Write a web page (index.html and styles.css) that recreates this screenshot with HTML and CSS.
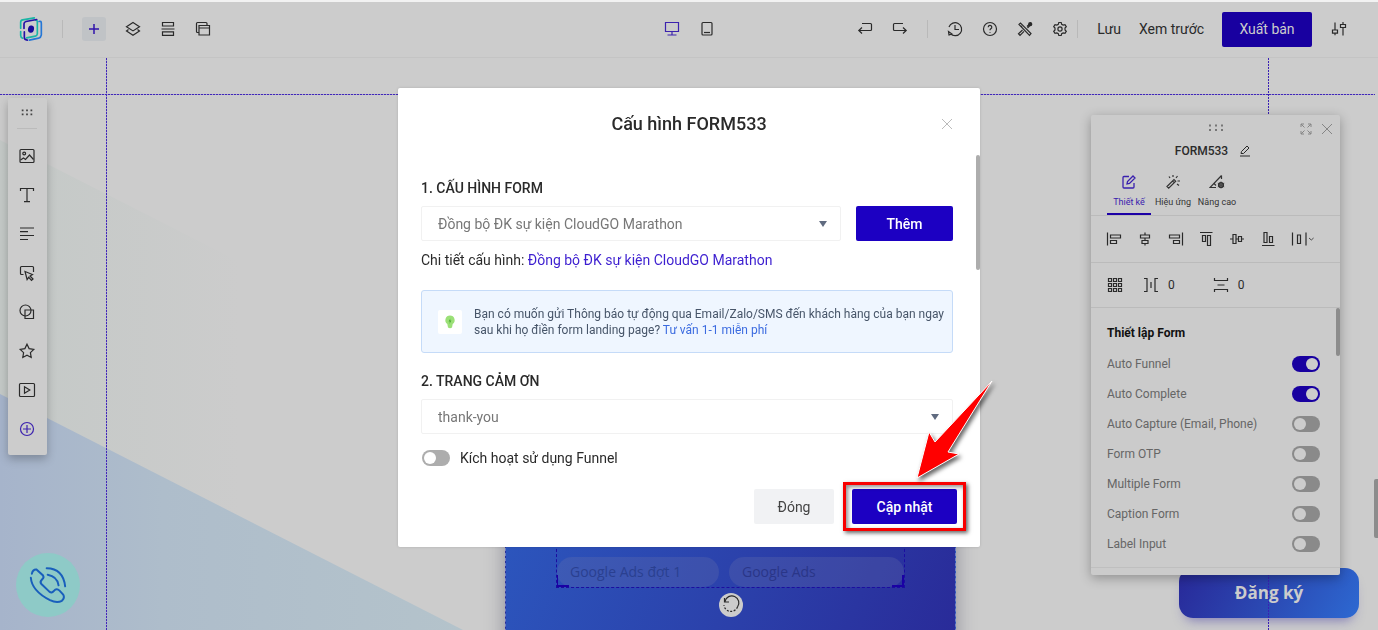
FILE: index.html
```html
<!DOCTYPE html>
<html lang="vi">
<head>
<meta charset="utf-8">
<meta name="viewport" content="width=device-width, initial-scale=1">
<title>Cấu hình FORM533</title>
<link rel="stylesheet" href="styles.css">
</head>
<body>
<div class="app">
  <header class="topbar">
    <div class="topbar-group">
      <svg class="logo" viewBox="57 52 72 75" fill="none" stroke-width="5" stroke-linecap="round" aria-label="Logo">
        <path stroke="#19b5a5" d="M62 87V69Q62 63 68 62L103 56M62 97V109Q62 115 68 117M107 63Q112 62 112 69V104Q111 110 106 111L80 116"/>
        <path stroke="#2410a6" d="M72 88V74Q72 69 78 67L110 61M73 98V115Q73 122 82 123"/>
        <path stroke="#2577d6" d="M117 67Q124 64 124 73V107Q123 115 116 117L88 123"/>
        <ellipse cx="93" cy="90" rx="9" ry="11" fill="#1a0b9c" stroke="none" transform="rotate(12 93 90)"/>
      </svg>
      <span class="divider"></span>
      <div class="tools">
        <button class="tool tool-add" aria-label="Thêm phần tử"><svg viewBox="0 0 24 24"><path stroke-width="1.5" d="M12 7v10M7 12h10"/></svg></button>
        <button class="tool" aria-label="Lớp"><svg viewBox="0 0 24 24"><path d="M12 5.500l6.500 4.200-6.500 4.200-6.500-4.200zM7.500 12.500l-2 1.500 6.500 4.300 6.500-4.300-2-1.500"/></svg></button>
        <button class="tool" aria-label="Section"><svg viewBox="0 0 24 24"><path d="M6.500 5.500h11v3.500h-11zM5.500 12h13M6.500 14.800h11v3.500h-11z"/></svg></button>
        <button class="tool" aria-label="Popup"><svg viewBox="0 0 24 24"><path d="M8 8.500h10.500v9.500H8zM8 11h10.500M8 15.500H6.500a1 1 0 0 1-1-1v-8a1 1 0 0 1 1-1h8.500a1 1 0 0 1 1 1v2"/></svg></button>
      </div>
    </div>
    <div class="tools">
      <button class="tool tool-active" aria-label="Máy tính"><svg viewBox="0 0 24 24"><path d="M5.500 5.500h13v9h-13zM12 14.500v3M7.500 18h9"/></svg></button>
      <button class="tool" aria-label="Di động"><svg viewBox="0 0 24 24"><rect x="7" y="5.500" width="10" height="12.500" rx="1"/><path d="M9 15.500h6"/></svg></button>
    </div>
    <div class="topbar-group topbar-end">
      <div class="tools">
        <button class="tool" aria-label="Hoàn tác"><svg viewBox="0 0 24 24"><path d="M9 6.500h8.500a1 1 0 0 1 1 1v5a1 1 0 0 1-1 1H6M9 10.500l-3.200 3 3.200 3"/></svg></button>
        <button class="tool" aria-label="Làm lại"><svg viewBox="0 0 24 24"><path d="M15 6.500H6.500a1 1 0 0 0-1 1v5a1 1 0 0 0 1 1H18M15 10.500l3.200 3-3.200 3"/></svg></button>
      </div>
      <span class="divider divider-wide"></span>
      <div class="tools">
        <button class="tool" aria-label="Lịch sử"><svg viewBox="0 0 24 24"><path d="M6 10a6.500 6.500 0 1 1 1.500 6.800M12 8v4.500h4M5.500 14.500l.5 3.500 3-1z"/></svg></button>
        <button class="tool" aria-label="Trợ giúp"><svg viewBox="0 0 24 24"><circle cx="12" cy="12" r="6.500"/><path d="M10.200 10.300a1.800 1.800 0 1 1 2.500 1.600q-.7.300-.7 1.300M12 15v.8"/></svg></button>
        <button class="tool" aria-label="Công cụ"><svg viewBox="0 0 24 24"><path d="M6 7.500L7.500 6l10.500 10.500-1.500 1.800zM14 9.500l3.500-3.500 1 1-4 4M9.500 13l-4 3.800 1.500 1.500 4-4M8 10l1-1"/><circle cx="17.200" cy="7.200" r="1.500" fill="currentColor"/></svg></button>
        <button class="tool" aria-label="Cài đặt"><svg viewBox="0 0 24 24"><path d="M10.800 5.500h2.400l.5 1.800 1.400.8 1.900-.5 1.300 2.100-1.300 1.400v1.800l1.300 1.400-1.300 2.100-1.900-.5-1.400.8-.5 1.800h-2.400l-.5-1.800-1.400-.8-1.900.5-1.300-2.100L7 12.900v-1.800L5.700 9.700 7 7.600l1.900.5 1.400-.8z"/><circle cx="12" cy="12" r="2.100"/></svg></button>
      </div>
      <span class="divider divider-near"></span>
      <nav class="actions">
        <a href="#save">Lưu</a>
        <a href="#preview">Xem trước</a>
        <button class="btn btn-publish">Xuất bản</button>
      </nav>
      <button class="tool tool-sliders" aria-label="Tùy chỉnh"><svg viewBox="0 0 24 24"><path d="M8 5.500v7M5.500 13h5v3.200h-5zM8 16.200v2M16 5v2.500M13.500 7.500h5v3h-5zM16 10.500v8"/></svg></button>
    </div>
  </header>

  <main class="canvas">
    <svg class="backdrop" viewBox="0 0 1378 573" preserveAspectRatio="xMinYMin slice" aria-hidden="true">
      <defs>
        <linearGradient id="haze"><stop offset="0" stop-color="#c4c9c7"/><stop offset="1" stop-color="#c4c9c7" stop-opacity="0"/></linearGradient>
        <linearGradient id="wedge"><stop offset="0" stop-color="#a6b4cb"/><stop offset=".35" stop-color="#aebdcb"/><stop offset="1" stop-color="#b4c3cb"/></linearGradient>
      </defs>
      <path fill="url(#haze)" d="M0 82L240 204V573H0z"/>
      <path fill="url(#wedge)" d="M0 336L465 573H0z"/>
    </svg>

    <section class="hero">
      <div class="hero-form">
        <div class="field">Google Ads đợt 1</div>
        <div class="field">Google Ads</div>
        <span class="corner corner-left"></span>
        <span class="corner corner-right"></span>
      </div>
      <button class="rotate" aria-label="Xoay"><svg viewBox="0 0 24 24"><path d="M6 8.500A7 7 0 1 1 18.500 14M5.500 5v4h4.500"/><path stroke-dasharray="2 1.500" d="M18.500 14A7 7 0 0 1 5 12"/></svg></button>
    </section>

    <button class="signup">Đăng ký</button>
    <span class="guide guide-h"></span>
    <span class="guide guide-v guide-v-left"></span>
    <span class="guide guide-v guide-v-right"></span>
    <span class="page-scroll"></span>

    <a class="call" href="#call" aria-label="Gọi điện">
      <svg viewBox="48 517 194 194"><path d="M96 580Q99 566 110 567L130 585Q134 592 127 597Q119 604 125 611L149 634Q157 640 163 632Q171 622 180 631L191 643Q197 653 187 662Q172 670 151 660C118 643 95 620 93 592M141 563Q191 564 197 618M144 583Q173 588 177 615"/></svg>
    </a>

    <aside class="palette">
      <svg class="grip" viewBox="0 0 14 8"><path d="M1 1.500h2M6 1.500h2M11 1.500h2M1 6h2M6 6h2M11 6h2"/></svg>
      <button class="tool" aria-label="Ảnh"><svg viewBox="0 0 24 24"><rect x="5" y="5.500" width="14" height="13" rx="1"/><circle cx="9.200" cy="9.500" r="1.400"/><path d="M5.500 16l3-2 2 1.500 4-4.500 4 4.500"/></svg></button>
      <button class="tool" aria-label="Văn bản"><svg viewBox="0 0 24 24"><path d="M5.500 8V5.500h13V8M12 5.500v13M9 18.700h6"/></svg></button>
      <button class="tool" aria-label="Đoạn văn"><svg viewBox="0 0 24 24"><path d="M5 6h14M5 9.700h8M5 13.500h14M5 17.500h8"/></svg></button>
      <button class="tool" aria-label="Nút"><svg viewBox="0 0 24 24"><path d="M8.500 13.500H6.500a1 1 0 0 1-1-1v-6a1 1 0 0 1 1-1h11a1 1 0 0 1 1 1V11M10 10.500l7.500 3-2.500 1.500 3 3-1.500 1.300-2.800-3-1.600 2.200z"/></svg></button>
      <button class="tool" aria-label="Hình khối"><svg viewBox="0 0 24 24"><circle cx="10.500" cy="10.500" r="5.500"/><path d="M10 10h8.500v8.500H10z"/></svg></button>
      <button class="tool" aria-label="Biểu tượng"><svg viewBox="0 0 24 24"><path d="M12 5.200l2.100 4.400 4.700.7-3.400 3.400.8 4.800L12 16.300l-4.200 2.200.8-4.800-3.400-3.400 4.700-.7z"/></svg></button>
      <button class="tool" aria-label="Video"><svg viewBox="0 0 24 24"><rect x="4.500" y="5.500" width="15" height="13" rx="1"/><path d="M9.500 8.800v6.400l5.300-3.200z"/></svg></button>
      <button class="tool tool-active" aria-label="Thêm"><svg viewBox="0 0 24 24"><circle cx="12" cy="12" r="6.500"/><path d="M12 8v8M8 12h8"/></svg></button>
    </aside>

    <aside class="panel">
      <div class="panel-head">
        <svg class="grip" viewBox="0 0 14 8"><path d="M0 1.500h2M6 1.500h2M12 1.500h2M0 6h2M6 6h2M12 6h2"/></svg>
        <h2>FORM533 <svg viewBox="0 0 12 12"><path d="M2 8.500l.5-2L8 1l2 2-5.500 5.500zM1 11h10"/></svg></h2>
        <div class="panel-window">
          <button aria-label="Mở rộng"><svg viewBox="0 0 12 12"><path d="M1 4V1h3M8 1h3v3M11 8v3H8M4 11H1V8M1 1l3.500 3.500M11 1L7.500 4.500M11 11L7.500 7.500M1 11l3.500-3.500"/></svg></button>
          <button aria-label="Đóng bảng"><svg viewBox="0 0 12 12"><path d="M1 1l10 10M11 1L1 11"/></svg></button>
        </div>
      </div>
      <nav class="tabs">
        <button class="tab tab-on"><svg viewBox="0 0 16 16"><path stroke-width="1.300" d="M8 2.500H3a1 1 0 0 0-1 1v9.500a1 1 0 0 0 1 1h9a1 1 0 0 0 1-1V9M6 10l.5-2.500L12 2l2 2-5.500 5.500z"/></svg>Thiết kế</button>
        <button class="tab"><svg viewBox="0 0 16 16"><path d="M2 12.500l7-7 1.700 1.700-7 7zM7.500 7l1.700 1.700M8 1v2M4 2.500l1 1.500M12.500 2L11 4M12.500 7h2.500M12 10l2 1.500"/></svg>Hiệu ứng</button>
        <button class="tab"><svg viewBox="0 0 16 16"><path d="M12.500 1.500L1 13.500h6M12.500 1.500V5M5 9.500l2 2"/><circle cx="12" cy="11" r="2.300" stroke-width="1.600"/><path d="M12 7.500v7M8.800 9.300l6.400 3.500M8.800 12.800l6.400-3.500" stroke-width=".8"/></svg>Nâng cao</button>
      </nav>
      <div class="align-row">
        <button aria-label="Căn trái"><svg viewBox="0 0 16 16"><path d="M1.500 1.500v13M4.500 4h10v3h-10zM4.500 9.500h6v3h-6z"/></svg></button>
        <button aria-label="Căn giữa ngang"><svg viewBox="0 0 16 16"><path d="M8 1.500V4M8 7v2.500M8 12.500v2M3.500 4h9v3h-9zM5 9.500h6v3H5z"/></svg></button>
        <button aria-label="Căn phải"><svg viewBox="0 0 16 16"><path d="M14.500 1.500v13M1.500 4h10v3h-10zM5.500 9.500h6v3h-6z"/></svg></button>
        <button aria-label="Căn trên"><svg viewBox="0 0 16 16"><path d="M2 1.500h12.500M4.500 4.500h3v6h-3zM9.500 4.500h3v10h-3z"/></svg></button>
        <button aria-label="Căn giữa dọc"><svg viewBox="0 0 16 16"><path d="M1 8h3M7 8h2.500M12.500 8H15M4 3.500h3v9H4zM9.500 5.500h3v5h-3z"/></svg></button>
        <button aria-label="Căn dưới"><svg viewBox="0 0 16 16"><path d="M2 14.500h12.500M4 1.500h3v10H4zM9.500 5.500h3v6h-3z"/></svg></button>
        <button class="spread" aria-label="Phân bố"><svg viewBox="0 0 24 16"><path d="M1.500 1.500v13M15 1.500v13M6.500 4h3v8.500h-3z"/><path stroke-width=".8" d="M18 7l2.300 2 2.300-2"/></svg></button>
      </div>
      <div class="space-row">
        <button aria-label="Lưới"><svg viewBox="0 0 16 16"><path d="M1.500 1.500h3v3h-3zM6.500 1.500h3v3h-3zM11.500 1.500h3v3h-3zM1.500 6.500h3v3h-3zM6.500 6.500h3v3h-3zM11.500 6.500h3v3h-3zM1.500 11.500h3v3h-3zM6.500 11.500h3v3h-3zM11.500 11.500h3v3h-3z"/></svg></button>
        <span class="space"><svg viewBox="0 0 16 16"><path d="M1 1.500h3v13H1M15 1.500h-3v13h3M8 5v6"/></svg>0</span>
        <span class="space"><svg viewBox="0 0 16 16"><path d="M1.500 1v2.500h13V1M1.500 15v-2.500h13V15M4.500 8h7"/></svg>0</span>
      </div>
      <div class="settings">
        <h3>Thiết lập Form</h3>
        <label class="setting">Auto Funnel<input class="switch" type="checkbox" checked></label>
        <label class="setting">Auto Complete<input class="switch" type="checkbox" checked></label>
        <label class="setting">Auto Capture (Email, Phone)<input class="switch" type="checkbox"></label>
        <label class="setting">Form OTP<input class="switch" type="checkbox"></label>
        <label class="setting">Multiple Form<input class="switch" type="checkbox"></label>
        <label class="setting">Caption Form<input class="switch" type="checkbox"></label>
        <label class="setting">Label Input<input class="switch" type="checkbox"></label>
        <span class="settings-scroll"></span>
      </div>
    </aside>
  </main>
</div>

<div class="overlay">
  <div class="modal" role="dialog" aria-labelledby="modal-title">
    <header class="modal-head">
      <h1 id="modal-title">Cấu hình FORM533</h1>
      <button class="modal-close" aria-label="Đóng cửa sổ"><svg viewBox="0 0 12 12"><path d="M1 1l10 10M11 1L1 11"/></svg></button>
    </header>
    <div class="modal-body">
      <label class="form-title" for="config">1. CẤU HÌNH FORM</label>
      <div class="form-row">
        <div class="picker"><select id="config"><option>Đồng bộ ĐK sự kiện CloudGO Marathon</option></select></div>
        <button class="btn btn-primary btn-add">Thêm</button>
      </div>
      <p class="detail">Chi tiết cấu hình: <a href="#config">Đồng bộ ĐK sự kiện CloudGO Marathon</a></p>
      <div class="notice">
        <span class="notice-icon"><svg viewBox="0 0 24 24"><path fill="#9be077" d="M12 5.500a4.700 4.700 0 0 1 2.700 8.500l-.7 3.500q-2 1.500-4 0L9.300 14A4.700 4.700 0 0 1 12 5.500z"/><path fill="#47a832" d="M12.300 8.500l-1.700 3h1.200l-.3 2.500 1.900-3.400h-1.200z"/></svg></span>
        <p>Bạn có muốn gửi Thông báo tự động qua Email/Zalo/SMS đến khách hàng của bạn ngay sau khi họ điền form landing page? <a href="#consult">Tư vấn 1-1 miễn phí</a></p>
      </div>
      <label class="form-title" for="thanks">2. TRANG CẢM ƠN</label>
      <div class="form-row">
        <div class="picker"><select id="thanks"><option>thank-you</option></select></div>
      </div>
      <label class="funnel"><input class="switch switch-modal" type="checkbox">Kích hoạt sử dụng Funnel</label>
    </div>
    <footer class="modal-foot">
      <button class="btn btn-plain">Đóng</button>
      <div class="callout">
        <button class="btn btn-primary btn-update">Cập nhật</button>
        <span class="callout-box"></span>
        <svg class="callout-arrow" viewBox="0 0 90 110"><path d="M11 101L23 55L29 65L86 4L42 75L53 77Z"/></svg>
      </div>
    </footer>
    <span class="modal-scroll"></span>
  </div>
</div>
</body>
</html>
```
FILE: styles.css
```css
* { box-sizing: border-box; }

body {
  margin: 0;
  font: 14px/20px Roboto, "Noto Sans", sans-serif;
  color: #2a2a2a;
  background: #ccc;
}

button {
  padding: 0;
  border: 0;
  background: none;
  font: inherit;
  color: inherit;
}

h1, h2, h3, p { margin: 0; }
a { color: inherit; text-decoration: none; }
svg { display: block; fill: none; stroke: currentColor; }

.app {
  display: flex;
  flex-direction: column;
  height: 100vh;
  overflow: hidden;
}

/* Top bar */
.topbar {
  display: grid;
  grid-template-columns: 1fr auto 1fr;
  align-items: center;
  flex: none;
  height: 58px;
  padding: 0 19px 1px;
  border-top: 2px solid #f2f2f2;
  border-bottom: 1px solid #c4c4c4;
}

.topbar-group { display: flex; align-items: center; }
.topbar-end { justify-content: flex-end; }
.logo { width: 24px; height: 26px; }
.tools { display: flex; gap: 11px; }
.tool { width: 24px; height: 24px; flex: none; }
.tool svg { width: 24px; height: 24px; stroke-width: 1.2; }
.tool-active { color: #3c22ae; }
.tool-add {
  margin-right: 4px;
  border-radius: 3px;
  background: #c0c3c6;
  color: #3014ac;
}

.divider { width: 1px; height: 18px; margin: 0 19px; background: #b9b9b9; }
.divider-wide { margin: 0 15px; }
.divider-near { margin: 0 19px 0 5px; }
.actions { display: flex; align-items: center; gap: 18px; }
.btn { height: 35px; border-radius: 2px; font-size: 14px; }
.btn-publish { width: 90px; background: #1800a0; color: #ccc; }
.tool-sliders { margin: 0 8px 0 15px; }

/* Canvas */
.canvas { position: relative; flex: 1; overflow: hidden; }
.backdrop { position: absolute; inset: 0; width: 100%; height: 100%; stroke: none; }

.guide { position: absolute; }
.guide-h {
  top: 36px;
  left: 0;
  right: 3px;
  height: 1px;
  background: repeating-linear-gradient(90deg, #4127b8 0 2px, #a7a2cc 2px 3px);
}
.guide-v {
  top: 0;
  bottom: 0;
  width: 1px;
  background: repeating-linear-gradient(#4127b8 0 2px, #a7a2cc 2px 3px);
}
.guide-v-left { left: 106px; }
.guide-v-right {
  right: 109px;
  background: repeating-linear-gradient(#3a20b4 0 2px, transparent 2px 3px);
}

.page-scroll {
  position: absolute;
  top: 421px;
  right: 0;
  width: 4px;
  height: 59px;
  border-radius: 2px 0 0 2px;
  background: #8c8c8c;
}

.hero {
  position: absolute;
  left: 505px;
  top: 399px;
  width: 451px;
  height: 200px;
  padding-top: 60px;
  border: 1px dashed #7080c4;
  background: linear-gradient(112deg, #2c58bf, #2b40aa 55%, #292a98);
  box-shadow: 0 4px 18px rgba(30, 30, 60, .35);
}
.hero-form {
  position: relative;
  display: grid;
  grid-template-columns: 162px 175px;
  justify-content: space-between;
  align-items: end;
  height: 70px;
  margin: 0 50px;
  border: 1px dashed #1b0da0;
  border-top: 0;
}
.field {
  height: 30px;
  padding-left: 13px;
  border-radius: 15px;
  background: rgba(110, 120, 170, .25);
  color: #2a4090;
  font: 14px/30px "Open Sans", sans-serif;
}
.field + .field { color: #2a3688; }
.corner {
  position: absolute;
  bottom: 0;
  width: 12px;
  height: 12px;
  border-bottom: 2px solid #1a00a4;
}
.corner-left { left: 0; border-left: 1px solid #1a00a4; }
.corner-right { right: 0; border-right: 2px solid #1a00a4; }
.rotate {
  display: block;
  width: 24px;
  height: 24px;
  margin: 5px auto 0;
  border-radius: 50%;
  background: #ccc;
}
.rotate svg { stroke-width: 1.2; }

.signup {
  position: absolute;
  top: 510px;
  right: 19px;
  width: 180px;
  height: 50px;
  border-radius: 14px;
  background: linear-gradient(120deg, #282898, #2b48b2 50%, #2d69d2);
  box-shadow: 0 8px 12px -6px rgba(50, 40, 160, .5);
  color: #ccc;
  font: 700 17px/24px "Open Sans", sans-serif;
}

.call {
  position: absolute;
  left: 16px;
  top: 495px;
  width: 64px;
  border-radius: 50%;
  background: #8ecac7;
  color: #195fbc;
}
.call svg { width: 64px; height: 64px; stroke-width: 6; stroke-linecap: round; }

/* Element palette */
.palette {
  position: absolute;
  left: 8px;
  top: 40px;
  display: flex;
  flex-direction: column;
  align-items: center;
  gap: 15px;
  width: 39px;
  padding: 11px 1px 14px 0;
  border-radius: 2px;
  background: #ccc;
  box-shadow: 0 4px 10px rgba(0, 0, 0, .25);
}
.grip { width: 16px; height: 8px; stroke: #444; stroke-width: 2; }
.palette .grip {
  width: 20px;
  height: 20px;
  padding: 0 2px 12px;
  border-bottom: 1px solid #bbb;
}

/* Property panel */
.panel {
  position: absolute;
  top: 57px;
  right: 38px;
  width: 249px;
  border-radius: 2px;
  background: #cbcbcb;
  box-shadow: 0 3px 12px rgba(0, 0, 0, .3);
  font-size: 12px;
}
.panel-head { padding-top: 9px; }
.panel-head .grip { margin: 0 auto; stroke: #777; }
.panel-head h2 {
  display: flex;
  align-items: center;
  justify-content: center;
  gap: 11px;
  margin-top: 9px;
  padding-right: 5px;
  font-size: 12px;
  line-height: 20px;
  font-weight: 500;
}
.panel-head h2 svg { width: 12px; height: 12px; }
.panel-window {
  position: absolute;
  top: 8px;
  right: 7px;
  display: flex;
  gap: 9px;
  color: #858585;
}
.panel-window svg { width: 12px; height: 12px; }
.tabs {
  display: flex;
  padding: 13px 16px 0;
  border-bottom: 1px solid #bbb;
}
.tab {
  display: flex;
  flex-direction: column;
  align-items: center;
  gap: 4px;
  width: 44px;
  height: 41px;
  font-size: 9px;
  line-height: 16px;
  white-space: nowrap;
  color: #333;
}
.tab svg { width: 16px; height: 16px; stroke-width: 1.2; }
.tab-on { border-bottom: 2px solid #1c00a6; color: #3a20ae; }
.align-row {
  display: flex;
  justify-content: space-between;
  padding: 15px 25px 15px 15px;
  border-bottom: 1px solid #bbb;
}
.align-row svg, .space-row svg { width: 16px; height: 16px; stroke-width: 1.2; }
.align-row .spread svg { width: 24px; }
.space-row {
  display: flex;
  align-items: center;
  padding: 12px 16px;
  border-bottom: 1px solid #bbb;
}
.space { display: flex; align-items: center; gap: 9px; margin-left: 20px; }
.space + .space { margin-left: 38px; }
.settings {
  position: relative;
  padding: 14px 20px 8px 16px;
  margin-bottom: 7px;
  border-bottom: 1px solid #bfbfbf;
}
.settings h3 { margin-bottom: 5px; font-size: 12px; line-height: 22px; font-weight: 700; color: #111; }
.setting {
  display: flex;
  align-items: center;
  justify-content: space-between;
  height: 30px;
  color: #666;
}
.settings-scroll {
  position: absolute;
  top: 0;
  right: 0;
  width: 4px;
  height: 48px;
  border-radius: 2px;
  background: #8c8c8c;
}

.switch {
  appearance: none;
  flex: none;
  width: 28px;
  height: 16px;
  margin: 0;
  padding: 2px;
  border-radius: 8px;
  background: #8a8a8a;
}
.switch::before {
  content: "";
  display: block;
  width: 12px;
  height: 12px;
  border-radius: 50%;
  background: #ccc;
}
.switch:checked { background: #1800a0; }
.switch:checked::before { margin-left: auto; }
.switch-modal { background: #adadad; }
.switch-modal::before { background: #fff; }

/* Dialog */
.overlay {
  position: fixed;
  inset: 0;
  display: flex;
  align-items: flex-start;
  justify-content: center;
  padding-top: 88px;
}
.modal {
  position: relative;
  width: 582px;
  max-width: 100%;
  padding: 0 27px 23px 23px;
  border-radius: 2px;
  background: #fff;
  box-shadow: 0 0 3px rgba(0, 0, 0, .15);
}
.modal-head {
  display: flex;
  align-items: center;
  justify-content: space-between;
  height: 72px;
}
.modal-head h1 {
  flex: 1;
  padding-left: 16px;
  font-size: 18px;
  line-height: 24px;
  font-weight: 500;
  text-align: center;
}
.modal-close { color: #bbb; }
.modal-close svg { width: 12px; height: 12px; }
.modal-body { padding-top: 18px; }
.form-title {
  display: block;
  margin-bottom: 8px;
  font-weight: 500;
}
.form-row { display: flex; gap: 15px; }
.picker { position: relative; flex: 1; }
.picker::after {
  content: "";
  position: absolute;
  right: 14px;
  top: 15px;
  border: 4px solid transparent;
  border-top: 6px solid #606b80;
  border-bottom: 0;
}
.picker select {
  appearance: none;
  display: block;
  width: 100%;
  height: 35px;
  padding: 0 32px 0 16px;
  border: 1px solid #f1f1f1;
  border-radius: 2px;
  background: #fff;
  color: #777;
  font: 14px/20px Roboto, "Noto Sans", sans-serif;
}
.btn-primary { background: #1c00c2; color: #fff; font-weight: 500; }
.btn-add { width: 97px; }
.detail { margin-top: 9px; }
.detail a { color: #3d1fd0; }
.notice {
  display: flex;
  align-items: center;
  gap: 12px;
  height: 63px;
  margin: 20px 0 18px;
  padding: 0 2px 0 16px;
  border: 1px solid #c5dbf8;
  border-radius: 3px;
  background: #eff6ff;
  color: #475569;
  font-size: 12px;
  line-height: 16px;
}
.notice a { color: #3b6be0; }
.notice-icon { flex: none; border-radius: 2px; background: #fff; }
.notice-icon svg { width: 24px; height: 24px; stroke: none; }
.funnel {
  display: flex;
  align-items: center;
  gap: 10px;
  margin-top: 14px;
  padding-left: 1px;
}
.modal-foot {
  display: flex;
  justify-content: flex-end;
  gap: 18px;
  margin: 21px -4px 0 0;
}
.btn-plain { width: 80px; background: #f1f2f4; color: #444; }
.btn-update { width: 105px; }
.callout { position: relative; }
.callout-box {
  position: absolute;
  inset: -7px -9px;
  border: 3px solid #f80000;
  box-shadow: 2px 2px 4px rgba(0, 0, 0, .6), inset 2px 2px 4px rgba(0, 0, 0, .45);
}
.callout-arrow {
  position: absolute;
  left: 54px;
  bottom: 37px;
  width: 90px;
  height: 110px;
  fill: #f00;
  stroke: #fff;
  filter: drop-shadow(2px 3px 2px rgba(0, 0, 0, .6));
}
.modal-scroll {
  position: absolute;
  top: 67px;
  right: 0;
  width: 4px;
  height: 115px;
  border-radius: 2px;
  background: #adadad;
}
```
